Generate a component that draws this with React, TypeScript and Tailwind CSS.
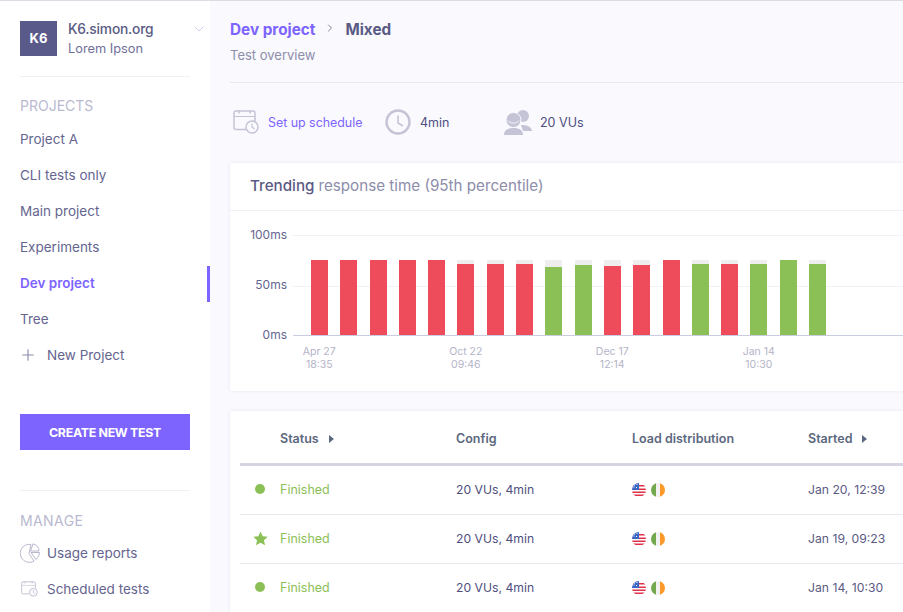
import { Plus, ChevronDown, ChevronRight } from "lucide-react";

const projects = ["Project A", "CLI tests only", "Main project", "Experiments", "Dev project", "Tree"];

// height of the coloured part of each bar, top of the grey part is always 75px
const bars = [
    { h: 75, c: "red" }, { h: 75, c: "red" }, { h: 75, c: "red" }, { h: 75, c: "red" }, { h: 75, c: "red" },
    { h: 71, c: "red" }, { h: 71, c: "red" }, { h: 71, c: "red" }, { h: 68, c: "green" }, { h: 70, c: "green" },
    { h: 69, c: "red" }, { h: 70, c: "red" }, { h: 75, c: "red" }, { h: 71, c: "green" }, { h: 71, c: "red" },
    { h: 71, c: "green" }, { h: 75, c: "green" }, { h: 71, c: "green" },
];

const ticks = [["Apr 27", "18:35"], ["Oct 22", "09:46"], ["Dec 17", "12:14"], ["Jan 14", "10:30"]];

const rows = [
    { star: false, started: "Jan 20, 12:39" },
    { star: true, started: "Jan 19, 09:23" },
    { star: false, started: "Jan 14, 10:30" },
];

function CalendarClock({ className }: { className?: string }) {
    return (
        <svg viewBox="0 0 26 24" fill="none" stroke="#c4c4d6" strokeWidth="1.5" className={className}>
            <path d="M13 19.5H3a2 2 0 0 1-2-2V3a2 2 0 0 1 2-2h17a2 2 0 0 1 2 2v8" />
            <path d="M1 6.5h21" strokeWidth="1" />
            <path d="M6 .5v3M17 .5v3" strokeWidth="1.5" />
            <circle cx="19" cy="17" r="6" fill="#f9f9fe" />
            <path d="M19 13.5V17l2.5 2" strokeWidth="1.2" />
        </svg>
    );
}

function UsageIcon() {
    return (
        <svg viewBox="0 0 20 20" fill="none" stroke="#b9b9ce" strokeWidth="1" className="w-5 h-5">
            <path d="M11 1.500a9 9 0 1 0 3 16.500L9 10.500z" />
            <path d="M13 .8a8 8 0 0 1 6 7.200h-8.500z" />
            <path d="M11 9.500h8.500a9 9 0 0 1-3.500 7z" />
        </svg>
    );
}

function ClockIcon() {
    return (
        <svg viewBox="0 0 26 26" fill="none" stroke="#c4c4d6" strokeWidth="2.4" className="w-[26px] h-[26px]">
            <circle cx="13" cy="13" r="11.5" />
            <path d="M13 6.5V14l5 3" strokeWidth="1.6" />
        </svg>
    );
}

function UsersIcon() {
    return (
        <svg viewBox="0 0 28 25" className="w-7 h-[25px]">
            <circle cx="19" cy="6" r="6" fill="#c4c4d6" />
            <path d="M17 15c5 0 10.500 1 11 6h-9z" fill="#c4c4d6" />
            <circle cx="9.500" cy="10" r="7.500" fill="#c4c4d6" stroke="#f9f9fe" strokeWidth="1" />
            <path d="M4 10.500c2 3.500 9 3.500 11 0" fill="none" stroke="#f9f9fe" strokeWidth="1" />
            <path d="M0 25c0-4.500 3.500-7 9.500-7s9.500 2.500 9.500 7z" fill="#c4c4d6" />
        </svg>
    );
}

function UsFlag() {
    return (
        <svg viewBox="0 0 14 14" className="w-3.5 h-3.5 rounded-full">
            <rect width="14" height="14" fill="#fff" />
            <path d="M0 2h14v1.500H0zM0 5.500h14V7H0zM0 8.500h14V10H0zM0 11.500h14V13H0z" fill="#e0314a" />
            <rect width="7" height="7" fill="#3b66c4" />
            <path d="M2 2h1M4.500 1.500h1M1.500 4h1M4 4.500h1" stroke="#fff" strokeWidth="1" />
        </svg>
    );
}

function IeFlag() {
    return (
        <svg viewBox="0 0 14 14" className="w-3.5 h-3.5 rounded-full">
            <rect width="5" height="14" fill="#74a84f" />
            <rect x="5" width="4" height="14" fill="#f2f2f2" />
            <rect x="9" width="5" height="14" fill="#fb9a2a" />
        </svg>
    );
}

function SortArrow() {
    return <span className="ml-2.5 w-0 h-0 border-y-[4px] border-y-transparent border-l-[5px] border-l-[#5c6880]" />;
}

export default function App() {
    return (
        <div className="w-[903px] h-[612px] overflow-hidden flex border-t border-[#dcdce4] font-[Inter,sans-serif] text-[13.500px] bg-[#f9f9fe]">
            {/* Sidebar */}
            <aside className="w-[210px] shrink-0 h-full bg-white pt-5">
                <div className="px-5">
                    <div className="flex items-start border-b border-[#efeff5] pb-5">
                        <div className="w-[37px] h-[35px] flex items-center justify-center bg-[#5a5a8a] text-white text-[13px] font-bold">K6</div>
                        <div className="ml-[11px] -mt-[2px] h-[37px] -mb-[2px] flex-1">
                            <div className="text-[#5a5a84] font-medium text-[13.800px] h-[20px] leading-[20px] tracking-[-0.2px]">K6.simon.org</div>
                            <div className="text-[#70709a] text-[12.800px] leading-[20px]">Lorem Ipson</div>
                        </div>
                        <ChevronDown className="w-4 h-4 text-[#cfcfee] mt-0 -mr-[17px]" strokeWidth={1.5} />
                    </div>
                    <div className="pt-5 h-[38px] leading-[18px] text-[#b9b9d0] text-[14px]">PROJECTS</div>
                </div>
                <nav className="mt-[7px]">
                    {projects.map((p) => (
                        <div
                            key={p}
                            className={
                                p === "Dev project"
                                    ? "h-9 pb-0.5 flex items-center pl-5 text-[#7d64ff] font-semibold border-r-[3px] border-[#7d64ff]"
                                    : "h-9 pb-0.5 flex items-center pl-5 text-[#65658f]"
                            }
                        >
                            {p}
                        </div>
                    ))}
                    <div className="h-9 pb-0.5 flex items-center pl-5 text-[#65658f]">
                        <Plus className="w-[18px] h-[18px] -ml-[1px] mr-2.5 text-[#8a8aa8]" strokeWidth={1.5} />
                        New Project
                    </div>
                </nav>
                <div className="px-5">
                    <button className="mt-10 w-full h-9 pt-0.5 bg-[#7d64ff] text-white text-[12.400px] font-bold tracking-tight">CREATE NEW TEST</button>
                    <div className="mt-10 border-t border-[#efeff5]" />
                    <div className="pt-[21px] h-[39px] leading-[18px] text-[#b9b9d0] text-[14px] tracking-[0.4px]">MANAGE</div>
                    <div className="mt-[5px] h-9 flex items-center text-[#65658f]">
                        <UsageIcon />
                        <span className="ml-[7px]">Usage reports</span>
                    </div>
                    <div className="h-9 flex items-center text-[#65658f]">
                        <CalendarClock className="w-[17px] h-[16px] ml-[1px]" />
                        <span className="ml-[9px]">Scheduled tests</span>
                    </div>
                </div>
            </aside>

            {/* Main */}
            <main className="pl-5 pt-[17px] w-[760px] shrink-0">
                <div className="flex items-center h-6 text-[15.300px] font-bold">
                    <span className="text-[#7d64ff]">Dev project</span>
                    <ChevronRight className="w-3 h-3 mx-[9px] -mt-1 text-[#5a5a84]" strokeWidth={1.5} />
                    <span className="text-[#5a5a84]">Mixed</span>
                </div>
                <div className="mt-[3px] h-5 leading-5 text-[#8d8dab] text-[13px]">Test overview</div>
                <div className="mt-[17px] border-t border-[#e9e9f0]" />

                <div className="mt-[25px] h-7 flex items-center">
                    <CalendarClock className="w-[26px] h-6 ml-[3px]" />
                    <span className="ml-[9px] pt-0.5 w-[117px] text-[#7d64ff] text-[12.400px]">Set up schedule</span>
                    <ClockIcon />
                    <span className="ml-[9px] pt-0.5 w-[84px] text-[#4f4f80] text-[12.500px]">4min</span>
                    <UsersIcon />
                    <span className="ml-2 pt-0.5 text-[#4f4f80] text-[12.500px]">20 VUs</span>
                </div>

                {/* Trending chart */}
                <section className="mt-[27px] h-[228px] bg-white shadow-[0_0_3px_rgba(90,90,138,0.12)]">
                    <div className="h-[48px] flex items-center pl-5 border-b border-[#efeff5] text-[15.200px]">
                        <span className="text-[#5a5a84] font-medium">Trending</span>
                        <span className="ml-1 text-[#8d8dab]">response time (95th percentile)</span>
                    </div>
                    <div className="flex pt-6">
                        <div className="w-[57px] h-[114px] -mt-[7px] -mb-[14px] flex flex-col justify-between items-end text-[12px] text-[#65658f] leading-[14px]">
                            <span>100ms</span>
                            <span>50ms</span>
                            <span>0ms</span>
                        </div>
                        <div className="relative ml-[6px] flex-1 h-[101px] border-b border-[#c9cde0] flex items-end pl-[18px] gap-[12.300px]">
                            <div className="absolute inset-x-0 top-0 border-t border-[#f2f2f6]" />
                            <div className="absolute inset-x-0 top-[51px] border-t border-[#f2f2f6]" />
                            {bars.map((b, i) => (
                                <div key={i} className="relative w-[17px] h-[75px] bg-[#eeeeee] flex items-end">
                                    <div
                                        className={b.c === "red" ? "w-full bg-[#ee4c5b]" : "w-full bg-[#8bc057]"}
                                        style={{ height: b.h }}
                                    />
                                </div>
                            ))}
                        </div>
                    </div>
                    <div className="flex ml-4 mt-[9px] text-[10.500px] leading-[13px] text-[#b4b4c8]">
                        {ticks.map((t) => (
                            <div key={t[0]} className="w-[146.500px] text-center">
                                <div>{t[0]}</div>
                                <div>{t[1]}</div>
                            </div>
                        ))}
                    </div>
                </section>

                {/* Test runs */}
                <section className="mt-5 bg-white px-2.5 shadow-[0_0_3px_rgba(90,90,138,0.12)]">
                    <div className="h-[55px] pt-1 flex items-center border-b-[3px] border-[#d4d4e2] text-[#5c6880] text-[12.500px] font-semibold">
                        <div className="w-[216px] pl-10 flex items-center">Status<SortArrow /></div>
                        <div className="w-[176px]">Config</div>
                        <div className="w-[176px]">Load distribution</div>
                        <div className="flex items-center">Started<SortArrow /></div>
                    </div>
                    {rows.map((r) => (
                        <div key={r.started} className="h-[49px] flex items-center border-b border-[#e8e8ef] text-[12.200px]">
                            <div className="w-10 flex justify-center">
                                {r.star ? (
                                    <svg viewBox="0 0 16 16" className="w-[15px] h-[15px] -mt-0.5" fill="#8bc057">
                                        <path d="M8 .5l2.300 5 5.400.6-4 3.700 1.100 5.400L8 12.500 3.200 15.200l1.100-5.400-4-3.700 5.400-.6z" />
                                    </svg>
                                ) : (
                                    <span className="w-2.5 h-2.5 rounded-full bg-[#8bc057] -mt-0.5" />
                                )}
                            </div>
                            <div className="w-[176px] text-[#8bc057] text-[12.500px]">Finished</div>
                            <div className="w-[176px] text-[#4f4f80]">20 VUs, 4min</div>
                            <div className="w-[176px] flex gap-[5px]">
                                <UsFlag />
                                <IeFlag />
                            </div>
                            <div className="text-[#5a5a84]">{r.started}</div>
                        </div>
                    ))}
                </section>
            </main>
        </div>
    );
}
